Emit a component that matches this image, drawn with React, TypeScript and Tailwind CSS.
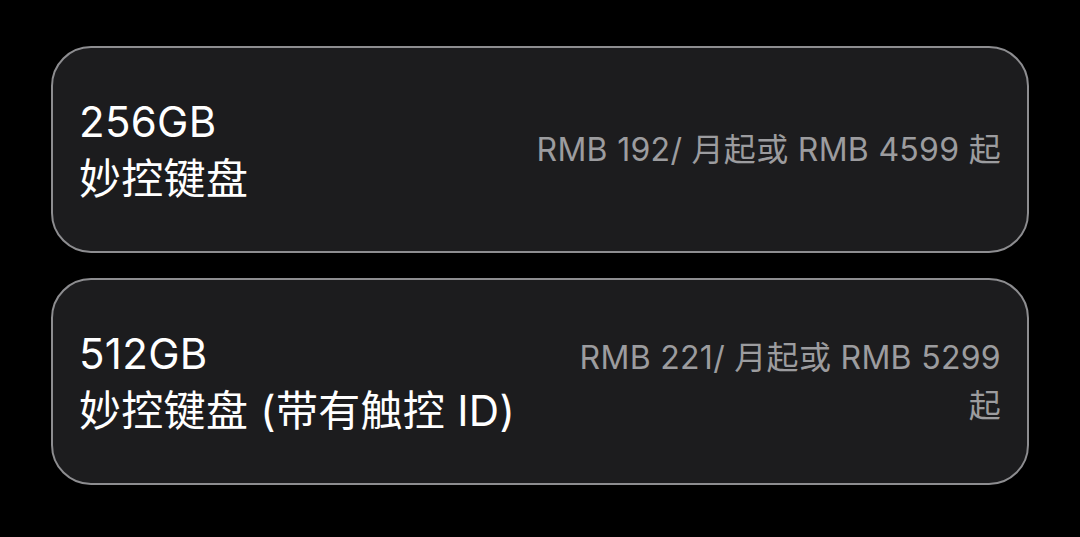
const OPTIONS = [
  {
    id: '256',
    size: '256GB',
    name: '妙控键盘',
    price: 'RMB 192/ 月起或 RMB 4599 起',
  },
  {
    id: '512',
    size: '512GB',
    name: '妙控键盘 (带有触控 ID)',
    price: 'RMB 221/ 月起或 RMB 5299 起',
  },
];

export default function App() {
  return (
    <div
      className="min-h-screen w-full bg-black px-[51px] pt-[46px] flex flex-col gap-[25px]"
      style={{ fontFamily: 'Inter, "Noto Sans CJK SC", sans-serif' }}
    >
      {OPTIONS.map((opt) => (
        <div
          key={opt.id}
          className="h-[207px] rounded-[40px] border-2 border-[#8d8d90] bg-[#1c1c1e] pl-[26px] pr-[26px] flex items-center gap-[60px]"
        >
          <div className="shrink-0 text-white text-[42px] leading-[57px] tracking-[0.3px]">
            <div>{opt.size}</div>
            <div>{opt.name}</div>
          </div>
          <div className="flex-1 text-right text-[#9c9c9f] text-[32px] leading-[48px] tracking-[0.3px]">
            {opt.price}
          </div>
        </div>
      ))}
    </div>
  );
}
